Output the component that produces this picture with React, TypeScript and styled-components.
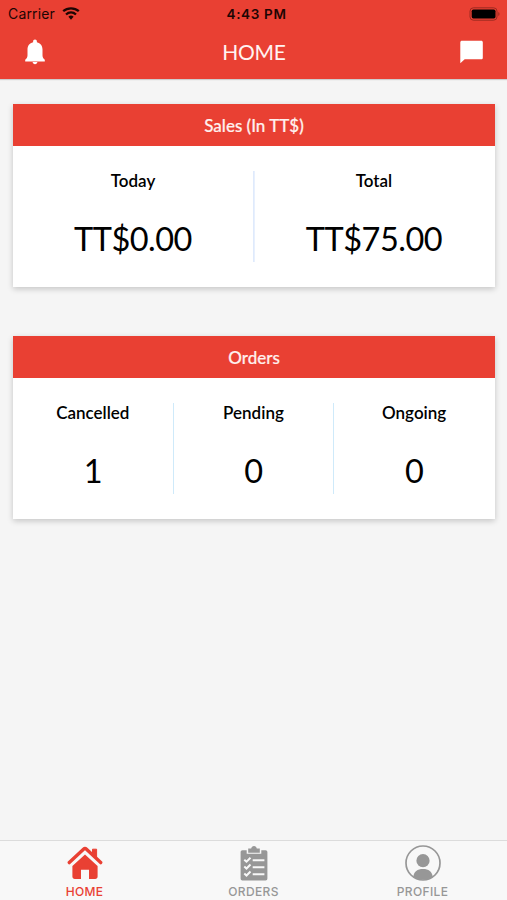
import React from "react";
import styled, { createGlobalStyle } from "styled-components";

const RED = "#e94033";

const GlobalStyle = createGlobalStyle`
  *, *::before, *::after { box-sizing: border-box; }
  body { margin: 0; background: #f5f5f5; }
`;

const Screen = styled.div`
  display: flex;
  flex-direction: column;
  height: 100vh;
  min-height: 900px;
  background: #f5f5f5;
  font-family: Lato, sans-serif;
  color: #000;
`;

const Header = styled.header`
  height: 79px;
  background: ${RED};
  box-shadow: 0 1px 1px rgba(0, 0, 0, 0.16);
`;

const StatusBar = styled.div`
  display: grid;
  grid-template-columns: 1fr auto 1fr;
  align-items: center;
  height: 27px;
  padding: 0 7px 0 8px;
  font-family: Inter, sans-serif;
  color: #1d0503;
`;

const Carrier = styled.div`
  display: flex;
  align-items: center;
  gap: 7px;
  font-size: 14px;
  line-height: 20px;
  letter-spacing: 0.15px;
`;

const Clock = styled.div`
  font-size: 13.5px;
  font-weight: 600;
  letter-spacing: 0.65px;
  padding-left: 5px;
`;

const Battery = styled.svg`
  justify-self: end;
  display: block;
`;

const NavBar = styled.div`
  display: grid;
  grid-template-columns: 1fr auto 1fr;
  align-items: center;
  height: 50px;
  padding: 0 24px;
`;

const Title = styled.h1`
  margin: 0;
  padding-left: 1px;
  font-size: 21px;
  font-weight: 400;
  line-height: 26px;
  letter-spacing: -0.3px;
  color: #fff3f1;
`;

const NavButton = styled.button<{ $end?: boolean }>`
  justify-self: ${(p) => (p.$end ? "end" : "start")};
  display: block;
  padding: 0;
  border: 0;
  background: none;
  svg { display: block; }
`;

const Content = styled.main`
  flex: 1;
  display: flex;
  flex-direction: column;
  gap: 49px;
  padding: 25px 12px 0 13px;
`;

const Card = styled.section`
  height: 183px;
  background: #fff;
  box-shadow: 0 2px 6px rgba(0, 0, 0, 0.2);
`;

const CardTitle = styled.h2`
  margin: 0;
  height: 42px;
  background: ${RED};
  color: #fff0ee;
  font-size: 17px;
  font-weight: 500;
  line-height: 43px;
  text-align: center;
  -webkit-text-stroke: 0.2px #fff0ee;
`;

const Stats = styled.div<{ $count: number }>`
  display: grid;
  grid-template-columns: repeat(${(p) => p.$count}, 1fr);
  padding-top: 25px;
`;

const Stat = styled.div<{ $rule: string }>`
  height: 91px;
  text-align: center;
  &:not(:last-child) { box-shadow: ${(p) => p.$rule}; }
`;

const Label = styled.div`
  margin-left: -1px;
  font-size: 17px;
  font-weight: 600;
  line-height: 20px;
`;

const Value = styled.div`
  margin: 28px 0 0 -1px;
  font-size: 32.5px;
  line-height: 40px;
  letter-spacing: -0.5px;
`;

const TabBar = styled.nav`
  display: grid;
  grid-template-columns: repeat(3, 1fr);
  height: 60px;
  border-top: 1px solid #dcdcdc;
  background: #f8f8f8;
`;

const Tab = styled.a<{ $active?: boolean }>`
  display: flex;
  flex-direction: column;
  align-items: center;
  padding-top: 4px;
  color: ${(p) => (p.$active ? RED : "#979797")};
  font-family: Inter, sans-serif;
  font-size: 12px;
  font-weight: 550;
  line-height: 16px;
  letter-spacing: 0.35px;
  svg { display: block; margin-bottom: 3px; }
`;

const WifiIcon = () => (
  <svg width="18" height="13" viewBox="0 0 18 13" fill="none" stroke="#1d0503" strokeWidth="2.3">
    <path d="M1.2 4.2C5.6.3 12.4.3 16.8 4.2" />
    <path d="M4 7.5c2.9-2.7 7.100-2.7 10 0" />
    <path d="M6.400 9.800a3.800 3.800 0 0 1 5.200 0L9 12.700z" fill="#1d0503" stroke="none" />
  </svg>
);

const BatteryIcon = () => (
  <Battery width="31" height="14" viewBox="0 0 31 14">
    <rect x="1" y=".8" width="27" height="12.4" rx="3.4" fill="none" stroke="#9c2a21" />
    <rect x="2.7" y="2.5" width="23.8" height="9" rx="1.7" fill="#000" />
    <path d="M29.3 5v4c1.6-.5 1.6-3.5 0-4z" fill="#9c2a21" />
  </Battery>
);

const BellIcon = () => (
  <svg width="22" height="26" viewBox="0 0 22 26" fill="#fff">
    <path d="M11 .5c1.200 0 1.900.9 1.900 2v.7c3.600.8 5.600 3.600 5.600 7.400v5.700c0 2 .7 3.200 2.300 4.500v1.800H1.200v-1.800c1.600-1.300 2.300-2.500 2.300-4.500v-5.700C3.500 6.800 5.500 4 9.100 3.200v-.7c0-1.100.7-2 1.900-2z" />
    <path d="M8.600 23.100h4.800c-.2 1.500-1.100 2.100-2.400 2.100s-2.200-.6-2.400-2.100z" />
  </svg>
);

const ChatIcon = () => (
  <svg width="23" height="24" viewBox="0 0 23 24" fill="#fff">
    <path d="M2 .7h19.200c1 0 1.600.7 1.600 1.600v15.400c0 1-.6 1.600-1.600 1.600H4.700L.3 23.300V2.400C.3 1.400 1 .7 2 .7z" />
  </svg>
);

const HomeIcon = () => (
  <svg width="36" height="36" viewBox="0 0 36 36" fill="currentColor">
    <path d="M18 9.500 30.600 21v10.600c0 1.500-.9 2.400-2.400 2.400H22v-9.200h-8V34H7.800c-1.500 0-2.400-.9-2.400-2.400V21z" />
    <path d="M2.300 17.600 16.500 4.200a2.200 2.200 0 0 1 3 0l14.200 13.400" fill="none" stroke="currentColor" strokeWidth="3.4" strokeLinecap="round" strokeLinejoin="round" />
    <path d="M25.500 4.200h4.100v9l-4.100-3.800z" stroke="currentColor" strokeLinejoin="round" />
  </svg>
);

const OrdersIcon = () => (
  <svg width="36" height="36" viewBox="0 0 36 36" fill="currentColor">
    <path d="M6.500 5.200h4.200v3.600h14.600V5.200h4.200c1.200 0 1.900.8 1.900 1.900v26.500c0 1.200-.7 1.900-1.900 1.900h-23c-1.200 0-1.900-.7-1.900-1.900V7.100c0-1.100.7-1.900 1.900-1.900z" />
    <path d="M12.200 3.600h3C15.500 2 16.500 1 18 1s2.500 1 2.800 2.600h3v4.100H12.200z" />
    <g fill="none" stroke="#f8f8f8" strokeWidth="2">
      <path d="m8.300 14.700 2.200 2 4-4M8.300 21.500l2.200 2 4-4M8.300 28.500l2.200 2 4-4" />
      <path d="M16.700 15.300h11.700M16.700 22.200h11.700M16.700 29.200h11.700" />
    </g>
  </svg>
);

const ProfileIcon = () => (
  <svg width="36" height="36" viewBox="0 0 36 36" fill="currentColor">
    <circle cx="18" cy="18" r="17" fill="none" stroke="currentColor" strokeWidth="1.7" />
    <circle cx="18" cy="15.7" r="6.6" />
    <path d="M8.300 32c.5-5.400 4.100-8 9.700-8s9.200 2.600 9.700 8C22 35.800 14 35.800 8.300 32z" />
  </svg>
);

interface StatItem {
  label: string;
  value: string;
}

const sales: StatItem[] = [
  { label: "Today", value: "TT$0.00" },
  { label: "Total", value: "TT$75.00" },
];

const orders: StatItem[] = [
  { label: "Cancelled", value: "1" },
  { label: "Pending", value: "0" },
  { label: "Ongoing", value: "0" },
];

const StatCard = ({ title, items, rule }: { title: string; items: StatItem[]; rule: string }) => (
  <Card>
    <CardTitle>{title}</CardTitle>
    <Stats $count={items.length}>
      {items.map((item) => (
        <Stat key={item.label} $rule={rule}>
          <Label>{item.label}</Label>
          <Value>{item.value}</Value>
        </Stat>
      ))}
    </Stats>
  </Card>
);

export default function App() {
  return (
    <Screen>
      <GlobalStyle />
      <Header>
        <StatusBar>
          <Carrier>
            Carrier
            <WifiIcon />
          </Carrier>
          <Clock>4:43 PM</Clock>
          <BatteryIcon />
        </StatusBar>
        <NavBar>
          <NavButton aria-label="Notifications"><BellIcon /></NavButton>
          <Title>HOME</Title>
          <NavButton $end aria-label="Messages"><ChatIcon /></NavButton>
        </NavBar>
      </Header>
      <Content>
        <StatCard title="Sales (In TT$)" items={sales} rule="inset -1px 0 #dfeafc, 1px 0 #e8f0fd" />
        <StatCard title="Orders" items={orders} rule="inset -1px 0 #cfeafa" />
      </Content>
      <TabBar>
        <Tab $active><HomeIcon />HOME</Tab>
        <Tab><OrdersIcon />ORDERS</Tab>
        <Tab><ProfileIcon />PROFILE</Tab>
      </TabBar>
    </Screen>
  );
}
